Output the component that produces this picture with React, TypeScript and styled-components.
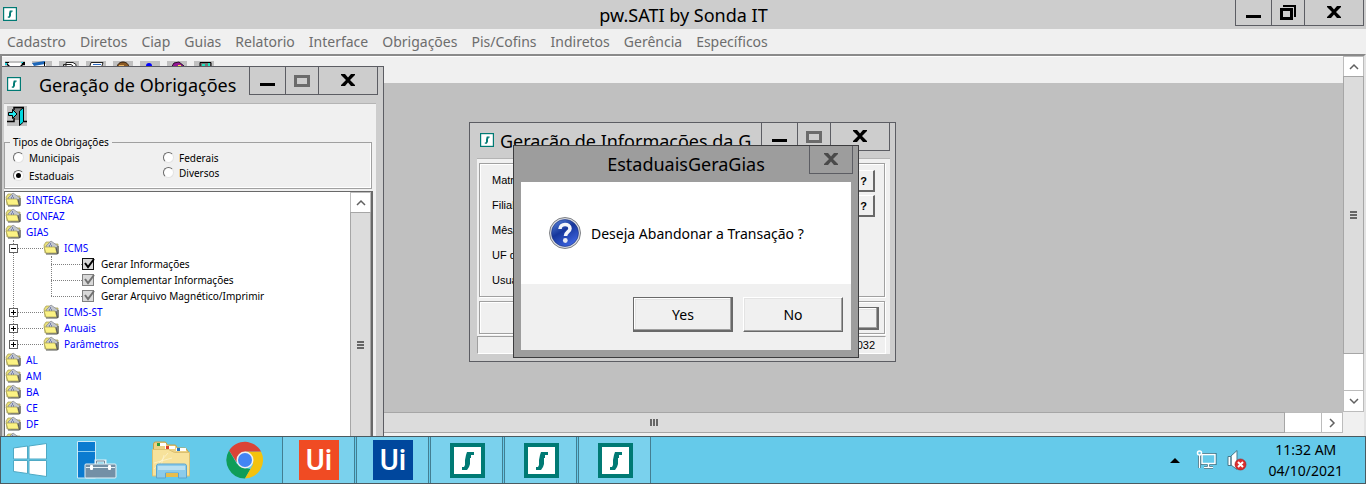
import React from "react";
import styled, { createGlobalStyle, css } from "styled-components";

const ui = `"Noto Sans", "Open Sans", sans-serif`;
const form = `"Liberation Sans", Arial, sans-serif`;

const GlobalStyle = createGlobalStyle`
  *, *::before, *::after { box-sizing: border-box; }
  body { margin: 0; font-family: ${ui}; color: #000; background: #f0f0f0; }
  button, input { font: inherit; color: inherit; margin: 0; padding: 0; }
  svg { display: block; flex: none; }
  ul { list-style: none; margin: 0; padding: 0; }
`;

const Screen = styled.div`
  display: flex;
  flex-direction: column;
  height: 100vh;
  overflow: hidden;
`;

/* ---------- application frame ---------- */

const AppTitle = styled.header`
  display: grid;
  grid-template-columns: 1fr auto 1fr;
  background: #cdcdcd;
  height: 29px;
  padding: 0 2px 0 3px;
`;

const AppIcon = styled.div`
  padding-top: 7px;
`;

const AppName = styled.h1`
  margin: 0;
  font-size: 18px;
  line-height: 30px;
  font-weight: 400;
`;

const Captions = styled.div<{ $inactive?: boolean; $modal?: boolean }>`
  display: flex;
  justify-self: end;
  flex: none;
  align-self: flex-start;
  height: ${(p) => (p.$inactive ? 28 : 26)}px;
  margin-right: ${(p) => (p.$modal ? -2 : 0)}px;
  border: 1px solid #5c5d63;
  border-top: 0;
`;

const CaptionButton = styled.button<{ $w: number }>`
  display: flex;
  align-items: center;
  justify-content: center;
  width: ${(p) => p.$w}px;
  border: 0;
  border-left: 1px solid #5c5d63;
  background: none;
  &:first-child { border-left: 0; }
`;

const MenuBar = styled.nav`
  display: flex;
  gap: 14px;
  padding: 0 7px;
  height: 25px;
  background: #f0f0f0;
`;

const MenuItem = styled.button`
  border: 0;
  background: none;
  color: #6d6d6d;
  font-size: 14px;
  line-height: 25px;
`;

const Workspace = styled.main`
  position: relative;
  flex: 1;
  min-height: 0;
  display: grid;
  grid-template-columns: 1fr 21px;
  grid-template-rows: 1fr 21px;
  overflow: hidden;
  border: 2px solid #e3e3e3;
  border-top-color: #8a8a8a;
  border-left-color: #8a8a8a;
  border-bottom: 0;
  padding-bottom: 3px;
  background: #f0f0f0;
`;

const Mdi = styled.div`
  background: #c0c0c0;
`;

const ToolBar = styled.div`
  display: flex;
  gap: 7px;
  height: 27px;
  padding: 4px 3px 0;
  background: #f0f0f0;
  border-top: 1px solid #fff;
`;

const ToolButton = styled.button`
  width: 20px;
  height: 20px;
  border: 0;
  background: #c0c0c0;
`;

/* ---------- scroll bars ---------- */

const Bar = styled.div<{ $across?: boolean }>`
  display: flex;
  flex: none;
  flex-direction: ${(p) => (p.$across ? "row" : "column")};
  background: #fff;
  border: 1px solid #bcbcbc;
`;

const BarArrow = styled.button<{ $across?: boolean }>`
  display: flex;
  align-items: center;
  justify-content: center;
  flex: none;
  width: ${(p) => (p.$across ? "20px" : "auto")};
  min-width: 19px;
  height: ${(p) => (p.$across ? "auto" : "20px")};
  border: 0;
  background: #fff;
  outline: 1px solid #bcbcbc;
`;

const Thumb = styled.div<{ $across?: boolean }>`
  display: flex;
  flex: 1;
  flex-direction: ${(p) => (p.$across ? "row" : "column")};
  align-items: center;
  justify-content: center;
  gap: 1px;
  background: #dcdcdc;
  outline: 1px solid #a6a6a6;
`;

const Grip = styled.i<{ $across?: boolean }>`
  width: ${(p) => (p.$across ? 2 : 7)}px;
  height: ${(p) => (p.$across ? 7 : 2)}px;
  background: #666;
`;

const Track = styled.div`
  flex: 0 0 38px;
`;

/* ---------- windows ---------- */

const Frame = styled.section<{ $x: number; $y: number; $w: number; $h: number; $modal?: boolean }>`
  position: absolute;
  left: ${(p) => p.$x}px;
  top: ${(p) => p.$y}px;
  width: ${(p) => p.$w}px;
  height: ${(p) => p.$h}px;
  display: flex;
  flex-direction: column;
  border: 1px solid ${(p) => (p.$modal ? "#3c3c3e" : "#5c5d63")};
  background: ${(p) => (p.$modal ? "#9d9d9d" : "#cdcdcd")};
  padding: 0 ${(p) => (p.$modal ? 7 : 5)}px 7px ${(p) => (p.$modal ? 7 : 6)}px;
`;

const FrameTitle = styled.header<{ $modal?: boolean }>`
  display: flex;
  flex: none;
  height: ${(p) => (p.$modal ? 36 : 35)}px;
`;

const FrameIcon = styled.div`
  padding: 10px 0 0 4px;
`;

const FrameName = styled.h2<{ $gap: number; $center?: boolean }>`
  flex: 1;
  min-width: 0;
  margin: 0;
  padding-left: ${(p) => p.$gap}px;
  overflow: hidden;
  white-space: nowrap;
  font-size: 18px;
  line-height: 36px;
  font-weight: 400;
  text-align: ${(p) => (p.$center ? "center" : "left")};
`;

const Client = styled.div`
  display: flex;
  flex-direction: column;
  flex: 1;
  min-height: 0;
  background: #f0f0f0;
  border-top: 1px solid #b4b4b4;
`;

/* ---------- obligations window ---------- */

const ObligationsClient = styled(Client)`
  margin: 1px 2px 0 1px;
  padding: 2px 3px 0 0;
  font-size: 10px;
`;

const ExitButton = styled.button`
  width: 20px;
  height: 20px;
  margin-left: 3px;
  border: 0;
  background: #c0c0c0;
`;

const Types = styled.fieldset`
  display: grid;
  grid-template-columns: 150px 1fr;
  flex: none;
  margin: 9px 1px 0 0;
  padding: 1px 8px 3px;
  height: 54px;
  border: 1px solid #a0a0a0;
  box-shadow: inset -1px -1px #fff;
`;

const Legend = styled.legend`
  margin-left: -3px;
  padding: 0 3px;
  line-height: 14px;
`;

const Options = styled.div<{ $tight?: boolean }>`
  display: flex;
  flex-direction: column;
  gap: ${(p) => (p.$tight ? 1 : 4)}px;
`;

const Option = styled.label`
  display: flex;
  gap: 5px;
  height: 14px;
  line-height: 17px;
`;

const Radio = styled.input.attrs({ type: "radio" })`
  appearance: none;
  display: grid;
  place-items: center;
  width: 11px;
  height: 11px;
  margin-top: 2px;
  border-radius: 50%;
  border: 1px solid;
  border-color: #696969 #e3e3e3 #e3e3e3 #696969;
  background: #fff;
  &:checked::after {
    content: "";
    width: 5px;
    height: 5px;
    border-radius: 50%;
    background: #000;
  }
`;

const TreePanel = styled.div`
  display: flex;
  flex: 1;
  min-height: 0;
  margin-top: 2px;
  background: #fff;
  border: 1px solid #696969;
  border-right-width: 2px;
`;

const Tree = styled.ul`
  flex: 1;
  overflow: hidden;
`;

const Branch = styled.ul<{ $x: number; $drop: number }>`
  position: relative;
  &::before {
    content: "";
    position: absolute;
    left: ${(p) => p.$x}px;
    top: 0;
    bottom: ${(p) => p.$drop}px;
    border-left: 1px dotted #808080;
  }
`;

const Node = styled.div<{ $indent?: number; $leaf?: boolean }>`
  position: relative;
  display: flex;
  align-items: center;
  height: 16px;
  padding-left: ${(p) => p.$indent ?? 0}px;
  color: ${(p) => (p.$leaf ? "#000" : "#00f")};
`;

const NodeName = styled.button`
  display: flex;
  align-items: center;
  gap: 4px;
  border: 0;
  background: none;
  line-height: 16px;
`;

const Dots = styled.i<{ $w: number }>`
  width: ${(p) => p.$w}px;
  border-top: 1px dotted #808080;
`;

const Toggle = styled.button`
  display: grid;
  place-items: center;
  width: 9px;
  height: 9px;
  border: 1px solid #606060;
  background: #fff;
`;

const Leaf = styled.label`
  display: flex;
  align-items: center;
  gap: 5px;
  line-height: 16px;
`;

const TickBox = styled.span`
  position: relative;
  display: block;
  width: 14px;
  height: 13px;
`;

const Tick = styled.input.attrs({ type: "checkbox" })`
  appearance: none;
  display: block;
  width: 12px;
  height: 12px;
  border: 1px solid #111;
  background: #d8d8d8;
  &:disabled { border-color: #808080; }
`;

const TickMark = styled.svg`
  position: absolute;
  left: 0;
  top: 0;
  pointer-events: none;
`;

/* ---------- GIA window ---------- */

const GiaClient = styled(Client)`
  margin: 0 0 0 1px;
  padding: 4px 5px 0 2px;
  font-family: ${form};
  font-size: 11px;
`;

const groove = css`
  border: 1px solid #a0a0a0;
  box-shadow: inset 1px 1px #fff, 1px 1px #fff;
`;

const Fields = styled.div`
  ${groove}
  display: flex;
  flex-direction: column;
  gap: 1px;
  height: 134px;
  flex: none;
  padding: 4px 9px 0 12px;
`;

const Field = styled.div`
  display: flex;
  justify-content: space-between;
  height: 24px;
  line-height: 24px;
`;

const HelpButton = styled.button`
  width: 22px;
  height: 22px;
  margin-top: 2px;
  border: 1px solid #fff;
  border-right: 2px solid #696969;
  border-bottom: 2px solid #696969;
  background: #f0f0f0;
  font-weight: 700;
  line-height: 18px;
`;

const Actions = styled.div`
  ${groove}
  display: flex;
  justify-content: flex-end;
  flex: none;
  height: 33px;
  margin-top: 4px;
  padding: 5px;
`;

const Status = styled.div`
  flex: none;
  height: 18px;
  margin: 2px -1px 0 -2px;
  padding: 0 10px;
  border: 1px solid;
  border-color: #a0a0a0 #fff #fff #a0a0a0;
  text-align: right;
  line-height: 17px;
`;

const PushButton = styled.button<{ $default?: boolean }>`
  width: 100px;
  height: 35px;
  border: 1px solid;
  border-color: #fff #696969 #696969 #fff;
  box-shadow: inset -1px -1px #a0a0a0, inset 1px 1px #e3e3e3;
  background: #f0f0f0;
  font-size: 14px;
  line-height: 30px;
  ${(p) =>
    p.$default &&
    css`
      border-color: #696969;
      box-shadow: inset -1px -1px #696969, inset -2px -2px #a0a0a0, inset 1px 1px #fff, inset 2px 2px #e3e3e3;
    `}
`;

const SmallPush = styled(PushButton)`
  width: 80px;
  height: 23px;
`;

/* ---------- message box ---------- */

const Message = styled.div`
  display: flex;
  align-items: center;
  gap: 10px;
  height: 102px;
  padding: 0 28px;
  background: #fff;
  font-size: 14px;
`;

const Buttons = styled.div`
  display: flex;
  flex: 1;
  justify-content: flex-end;
  gap: 10px;
  padding: 13px 8px;
  background: #f0f0f0;
`;

/* ---------- task bar ---------- */

const TaskBar = styled.footer`
  display: flex;
  flex: none;
  height: 48px;
  gap: 2px;
  background: #65caea;
  border: 1px solid #4b5a60;
`;

const Task = styled.button<{ $open?: boolean; $start?: boolean }>`
  display: flex;
  align-items: center;
  justify-content: center;
  width: ${(p) => (p.$start ? 58 : 72)}px;
  border: 0;
  background: ${(p) => (p.$open ? "#7ad1ed" : "none")};
  box-shadow: ${(p) => (p.$open ? "-1px 0 #437e92, inset -1px 0 #437e92" : "none")};
`;

const Tile = styled.span<{ $color: string }>`
  width: 40px;
  height: 40px;
  background: ${(p) => p.$color};
  color: #fff;
  font: 500 29px/40px Roboto, sans-serif;
  text-align: center;
`;

const Tray = styled.div`
  display: flex;
  align-items: center;
  gap: 10px;
  margin-left: auto;
  padding-right: 22px;
`;

const TrayButton = styled.button`
  border: 0;
  background: none;
`;

const Clock = styled.time`
  padding-left: 12px;
  font-size: 14px;
  line-height: 21px;
  text-align: center;
`;

/* ---------- icons ---------- */

const SondaIcon = ({ size = 14 }: { size?: number }) => (
  <svg width={size} height={size} viewBox="0 0 35 35">
    <path fill="#007a74" d="M0 0h35v35H0z" />
    <path fill="#fff" d={size > 20 ? "M4 4h27v27H4z" : "M3 3h29v29H3z"} />
    <path fill="#007a74" d="M17 9h7v3h-3v3h-1v6l-1 3-2 3h-5v-3h2l1-2v-5l1-5z" />
  </svg>
);

const MinIcon = () => (
  <svg width="15" height="16" shapeRendering="crispEdges"><path d="M0 10h15v3H0z" /></svg>
);
const MaxIcon = () => (
  <svg width="16" height="12" shapeRendering="crispEdges"><path fill="none" stroke="#6b6b6b" strokeWidth="3" d="M1.500 1.500h13v9h-13z" /></svg>
);
const RestoreIcon = () => (
  <svg width="16" height="15" shapeRendering="crispEdges">
    <path fill="none" stroke="#000" strokeWidth="3" d="M1.500 4.500h10v9h-10z" />
    <path d="M3 0h13v12h-2V2H3z" />
  </svg>
);
const CloseIcon = ({ color = "#000" }: { color?: string }) => (
  <svg width="14" height="13"><path fill={color} d="M0 0h4l3 3.500L10 0h4v1L9 6l5 5v1h-4L7 8.500 4 12H0v-1l5-5-5-5z" /></svg>
);

const arrows = { up: "M2 8l4-4 4 4", down: "M2 4l4 4 4-4", right: "M4 2l4 4-4 4", left: "M8 2L4 6l4 4" };
const Chevron = ({ to }: { to: keyof typeof arrows }) => (
  <svg width="12" height="12"><path d={arrows[to]} fill="none" stroke="#606060" strokeWidth="1.500" /></svg>
);

const Folder = () => (
  <svg width="17" height="16" viewBox="0 0 17 16">
    <path d="M1 5l2-3h4l2 2h6v9H2z" fill="#e8df7a" stroke="#a39c55" strokeWidth=".7" />
    <path d="M3 6l5-5 7 5v7H6z" fill="#c2c6cc" stroke="#85878b" strokeWidth=".7" />
    <path d="M7 4h2M6 6h4" stroke="#2d3f95" strokeDasharray="1 1" />
    <path d="M1 7h11l2 6H3z" fill="#fbf283" stroke="#a39c55" strokeWidth=".7" />
    <path d="M3 14h11.500L13 7M15 6v8" fill="none" stroke="#55564e" />
  </svg>
);

const ExitDoor = () => (
  <svg width="20" height="20">
    <path d="M7 2h8v12H7z" fill="#808080" />
    <path d="M7 4V1.500h10M0 15.500h7V12M17 15.500h3" fill="none" stroke="#000" strokeWidth="1.500" />
    <path d="M12.500 5l4-3.500V16l-4 3.500z" fill="#00d7df" stroke="#000" />
    <path d="M1.500 6.500h4v-3L10 8l-4.500 4.500v-3h-4z" fill="#20e6ee" stroke="#000" />
  </svg>
);

const toolArt = [
  <><path fill="#fff" d="M3 2h14v4H3z" /><path d="M0 1h4v1H2l3 3H3L1 3zM16 1h4v3h-2l-2 2h-2l3-3z" /><path fill="#19d2dc" d="M0 2h2v2H0zM16 1h2v1h-2z" /></>,
  <><path fill="#fff" d="M0 3h14v4H0z" /><path fill="#1c66b8" d="M0 2l13-2v3L2 5z" /><path d="M12 1h1v5h-1z" /></>,
  <><path fill="#fff" stroke="#222" d="M7 1.500h7l3 2V8H7z" /><path fill="none" stroke="#222" d="M4.500 8V3.500H12L14 5" /></>,
  <><path fill="#fff" stroke="#222" d="M5 1.500h12L15 8H3z" /><path stroke="#2e6bc2" d="M7 3.500h8M6 5.500h8" /></>,
  <><path fill="#8b5a24" stroke="#2b1a0c" d="M4 7c0-4 3-6 6-6s6 2 6 6z" /><path fill="#e9b566" d="M6 4h5v3H6z" /></>,
  <><circle cx="9" cy="5" r="3" fill="#00f" /></>,
  <><path fill="#951793" stroke="#2b0c2b" d="M4 7l3-5 5-1 5 4v3z" /><path fill="#ffe94a" d="M11 4h3v2h-3z" /></>,
  <><path fill="#777" stroke="#000" d="M6 1.500h11V8H6z" /><path fill="#20e6c0" d="M8 3h3v3H8zM14 2h2v5h-2z" /></>,
];

const WindowsLogo = () => (
  <svg width="34" height="34"><path fill="#fff" stroke="#4fa9c4" d="M.5 5l14-2v13H.5zM16 3l17.500-2.500V16H16zM.5 17.500h14v13l-14-2zM16 17.500h17.500v16L16 31z" /></svg>
);
const ServerIcon = () => (
  <svg width="40" height="38">
    <path fill="#0a7bd0" stroke="#cdeaf6" d="M.5.500h18V37H.5z" /><path stroke="#8ccdf0" d="M1 10.500h17" />
    <path fill="none" stroke="#e6f2f7" strokeWidth="3" d="M19 23v-3h9v3" />
    <path fill="none" stroke="#70889a" d="M19.500 23v-3h8v3" />
    <rect x="8" y="23" width="31" height="14" rx="1" fill="#7390a6" stroke="#e6f2f7" />
    <path stroke="#e6f2f7" d="M9 26.500h29" /><rect x="13" y="24" width="3" height="5" rx="1" fill="#fff" /><rect x="31" y="24" width="3" height="5" rx="1" fill="#fff" />
  </svg>
);
const ExplorerIcon = () => (
  <svg width="40" height="38">
    <path fill="#ecd184" stroke="#c5a248" d="M2.500 34V3q0-2 2-2h10l2 3h8l2 3h8l3 4v23z" />
    <path fill="#fff" d="M6 2h9v3H6zM14 5h10v3H14zM25 7h10v3H25z" />
    <path fill="#2b9d3f" d="M6 2h3v3H6z" /><path fill="#d8412c" d="M15 5h3v3h-3z" /><path fill="#2276c4" d="M26 7h3v3h-3z" />
    <path fill="#f7e29b" stroke="#dcc071" d="M1.500 8.500h16l6 3h15V35h-37z" />
    <path d="M3 28L17 12M3 22l18-5M8 32l5-18" stroke="#fff8db" strokeOpacity=".6" />
    <path fill="#8ccbea" stroke="#5da5cf" d="M5.500 37V25q0-2 2-2h26q2 0 2 2v12h-8v-5h-13v5z" />
    <path fill="#e7bd4d" d="M15 32h12v4H15z" /><path fill="#b9e0f2" d="M7 25h27v4H7z" />
  </svg>
);
const ChromeIcon = () => (
  <svg width="38" height="38" viewBox="0 0 38 38">
    <path fill="#0f9d58" d="M19 37.500A18.500 18.500 0 0 1 3.100 9.500L11 23l8 4 5.500 1z" />
    <path fill="#f4c20d" d="M35 10.500a18.500 18.500 0 0 1-16 27l8-14L19 10.500z" />
    <path fill="#db4437" d="M10.500 21L3.100 9.500A18.500 18.500 0 0 1 35 10.500H19z" />
    <circle cx="19" cy="19" r="8.500" fill="#f1f1f1" /><circle cx="19" cy="19" r="7" fill="#4285f4" />
  </svg>
);
const NetworkIcon = () => (
  <svg width="21" height="20" fill="#65caea" stroke="#2b6478" strokeWidth="3">
    <path d="M6 4.500h13v9H6zM12.500 14v3M8 17.500h9M3.500 5v13" />
    <path stroke="#fff" strokeWidth="1.500" d="M6 4.500h13v9H6zM12.500 14v3M8 17.500h9M3.500 5v13" />
    <circle cx="3.500" cy="3" r="2" stroke="#fff" strokeWidth="1.500" />
  </svg>
);
const SpeakerIcon = () => (
  <svg width="20" height="21">
    <path fill="#fff" stroke="#47798a" d="M1 6.500h3v9H1zM4 6l6-5.500v19L4 15z" />
    <circle cx="13.500" cy="14.500" r="5.500" fill="#dc2d2d" stroke="#9c1d1d" strokeWidth=".6" />
    <path stroke="#fff" strokeWidth="2" d="M11 12l5 5M16 12l-5 5" />
  </svg>
);
const QuestionIcon = () => (
  <svg width="32" height="32">
    <defs><linearGradient id="ball" x2=".6" y2="1"><stop stopColor="#5d8be0" /><stop offset=".5" stopColor="#16369b" /><stop offset="1" stopColor="#3c63de" /></linearGradient></defs>
    <circle cx="16" cy="16" r="15.500" fill="#d9dce2" stroke="#7e8085" />
    <circle cx="16" cy="16" r="13.500" fill="url(#ball)" stroke="#1a2f7c" strokeWidth=".6" />
    <path fill="none" stroke="#f4f6fb" strokeWidth="3.600" d="M11 12c0-6 10-6 10-.5 0 3.500-4.500 3.500-4.500 7.500" />
    <circle cx="16.300" cy="23.500" r="2.400" fill="#e8eaf2" />
  </svg>
);

/* ---------- parts ---------- */

const ScrollBar = ({ across, end }: { across?: boolean; end?: boolean }) => (
  <Bar $across={across}>
    <BarArrow $across={across} aria-label="Scroll back"><Chevron to={across ? "left" : "up"} /></BarArrow>
    <Thumb $across={across}><Grip $across={across} /><Grip $across={across} /><Grip $across={across} /></Thumb>
    {end && <Track />}
    {end && <BarArrow $across={across} aria-label="Scroll on"><Chevron to={across ? "right" : "down"} /></BarArrow>}
  </Bar>
);

const WindowButtons = ({ restore }: { restore?: boolean }) => (
  <Captions $inactive={!restore}>
    <CaptionButton $w={35} aria-label="Minimize"><MinIcon /></CaptionButton>
    <CaptionButton $w={33} aria-label="Maximize">{restore ? <RestoreIcon /> : <MaxIcon />}</CaptionButton>
    <CaptionButton $w={59} aria-label="Close"><CloseIcon /></CaptionButton>
  </Captions>
);

const FolderNode = ({ name, toggle }: { name?: string; toggle?: "+" | "-" }) => (
  <Node $indent={toggle && 4}>
    {toggle && (
      <>
        <Toggle aria-label={toggle === "+" ? "Expand" : "Collapse"}>
          <svg width="5" height="5" shapeRendering="crispEdges"><path d={toggle === "+" ? "M0 2h5v1H0zM2 0h1v5H2z" : "M0 2h5v1H0z"} /></svg>
        </Toggle>
        <Dots $w={25} />
      </>
    )}
    <NodeName><Folder />{name}</NodeName>
  </Node>
);

const leaves = [
  { name: "Gerar Informações", on: true },
  { name: "Complementar Informações", on: false },
  { name: "Gerar Arquivo Magnético/Imprimir", on: false },
];

const menus = ["Cadastro", "Diretos", "Ciap", "Guias", "Relatorio", "Interface", "Obrigações", "Pis/Cofins", "Indiretos", "Gerência", "Específicos"];
const tools = ["Novo", "Abrir", "Copiar", "Imprimir", "Usuário", "Informação", "Ajuda", "Sair"];

const RadioOption = ({ name }: { name: string }) => (
  <Option><Radio name="tipo" defaultChecked={name === "Estaduais"} />{name}</Option>
);

const ObligationsWindow = () => (
  <Frame $x={-6} $y={10} $w={388} $h={420}>
    <FrameTitle>
      <FrameIcon><SondaIcon /></FrameIcon>
      <FrameName $gap={18}>Geração de Obrigações</FrameName>
      <WindowButtons />
    </FrameTitle>
    <ObligationsClient>
      <ExitButton aria-label="Sair"><ExitDoor /></ExitButton>
      <Types>
        <Legend>Tipos de Obrigações</Legend>
        <Options><RadioOption name="Municipais" /><RadioOption name="Estaduais" /></Options>
        <Options $tight><RadioOption name="Federais" /><RadioOption name="Diversos" /></Options>
      </Types>
      <TreePanel>
        <Tree>
          <li><FolderNode name="SINTEGRA" /></li>
          <li><FolderNode name="CONFAZ" /></li>
          <li>
            <FolderNode name="GIAS" />
            <Branch $x={8} $drop={8}>
              <li>
                <FolderNode name="ICMS" toggle="-" />
                <Branch $x={46} $drop={8}>
                  {leaves.map((l) => (
                    <li key={l.name}>
                      <Node $indent={46} $leaf>
                        <Dots $w={31} />
                        <Leaf>
                          <TickBox>
                            <Tick defaultChecked disabled={!l.on} />
                            <TickMark width="14" height="13"><path d="M3 5l3 4 6-8" fill="none" stroke={l.on ? "#000" : "#707070"} strokeWidth="2" /></TickMark>
                          </TickBox>
                          {l.name}
                        </Leaf>
                      </Node>
                    </li>
                  ))}
                </Branch>
              </li>
              {["ICMS-ST", "Anuais", "Parâmetros"].map((n) => <li key={n}><FolderNode name={n} toggle="+" /></li>)}
            </Branch>
          </li>
          {["AL", "AM", "BA", "CE", "DF"].map((n) => <li key={n}><FolderNode name={n} /></li>)}
          <li><FolderNode /></li>
        </Tree>
        <ScrollBar />
      </TreePanel>
    </ObligationsClient>
  </Frame>
);

const GiaWindow = () => (
  <Frame $x={467} $y={66} $w={427} $h={240}>
    <FrameTitle>
      <FrameIcon><SondaIcon /></FrameIcon>
      <FrameName $gap={6}>Geração de Informações da G</FrameName>
      <WindowButtons />
    </FrameTitle>
    <GiaClient>
      <Fields>
        <Field>Matriz<HelpButton>?</HelpButton></Field>
        <Field>Filial<HelpButton>?</HelpButton></Field>
        <Field>Mês/Ano</Field>
        <Field>UF da GIA</Field>
        <Field>Usuário</Field>
      </Fields>
      <Actions><SmallPush $default aria-label="Sair" /></Actions>
      <Status>032</Status>
    </GiaClient>
  </Frame>
);

const AbandonDialog = () => (
  <Frame $modal $x={511} $y={89} $w={346} $h={213} role="dialog" aria-label="EstaduaisGeraGias">
    <FrameTitle $modal>
      <FrameName $center $gap={42}>EstaduaisGeraGias</FrameName>
      <Captions $inactive $modal><CaptionButton $w={42} aria-label="Close"><CloseIcon color="#4a4a4a" /></CaptionButton></Captions>
    </FrameTitle>
    <Message><QuestionIcon />Deseja Abandonar a Transação ?</Message>
    <Buttons>
      <PushButton $default>Yes</PushButton>
      <PushButton>No</PushButton>
    </Buttons>
  </Frame>
);

export default function App() {
  return (
    <Screen>
      <GlobalStyle />
      <AppTitle>
        <AppIcon><SondaIcon /></AppIcon>
        <AppName>pw.SATI by Sonda IT</AppName>
        <WindowButtons restore />
      </AppTitle>
      <MenuBar>{menus.map((m) => <MenuItem key={m}>{m}</MenuItem>)}</MenuBar>
      <Workspace>
        <Mdi>
          <ToolBar>
            {tools.map((t, i) => <ToolButton key={t} aria-label={t}><svg width="20" height="20">{toolArt[i]}</svg></ToolButton>)}
          </ToolBar>
        </Mdi>
        <ScrollBar end />
        <ScrollBar across end />
        <ObligationsWindow />
        <GiaWindow />
        <AbandonDialog />
      </Workspace>
      <TaskBar>
        <Task $start aria-label="Start"><WindowsLogo /></Task>
        <Task aria-label="Server Manager"><ServerIcon /></Task>
        <Task aria-label="File Explorer"><ExplorerIcon /></Task>
        <Task aria-label="Chrome"><ChromeIcon /></Task>
        <Task $open><Tile $color="#f04b23">Ui</Tile></Task>
        <Task $open><Tile $color="#00479d">Ui</Tile></Task>
        <Task $open aria-label="SATI"><SondaIcon size={35} /></Task>
        <Task $open aria-label="SATI"><SondaIcon size={35} /></Task>
        <Task $open aria-label="SATI"><SondaIcon size={35} /></Task>
        <Tray>
          <TrayButton aria-label="Show hidden icons"><svg width="20" height="6"><path d="M4 6l5-5 5 5z" /></svg></TrayButton>
          <TrayButton aria-label="Network"><NetworkIcon /></TrayButton>
          <TrayButton aria-label="Volume"><SpeakerIcon /></TrayButton>
          <Clock>11:32 AM<br />04/10/2021</Clock>
        </Tray>
      </TaskBar>
    </Screen>
  );
}
